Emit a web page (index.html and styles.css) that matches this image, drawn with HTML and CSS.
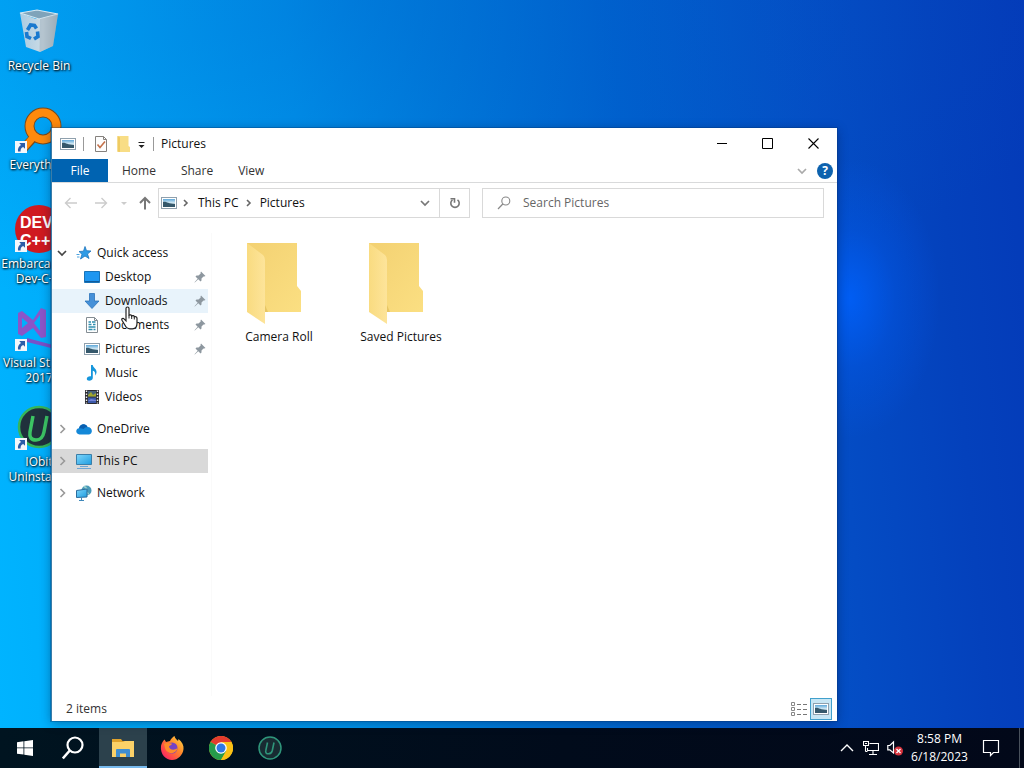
FILE: index.html
```html
<!DOCTYPE html>
<html lang="en">
<head>
<meta charset="utf-8">
<title>Pictures</title>
<link rel="stylesheet" href="styles.css">
</head>
<body>
<svg class="defs" aria-hidden="true">
  <defs>
    <linearGradient id="sky" x1="0" y1="0" x2="0" y2="1"><stop offset="0" stop-color="#5da7d9"/><stop offset=".5" stop-color="#d8ecf5"/><stop offset="1" stop-color="#4a7890"/></linearGradient>
    <linearGradient id="fold" x1="0" y1="0" x2="1" y2="1"><stop offset="0" stop-color="#f3d172"/><stop offset="1" stop-color="#fbdf82"/></linearGradient>
    <linearGradient id="flap" x1="0" y1="0" x2="1" y2="0"><stop offset="0" stop-color="#f9db80"/><stop offset="1" stop-color="#fde49a"/></linearGradient>
    <linearGradient id="screen" x1="0" y1="0" x2="1" y2="1"><stop offset="0" stop-color="#7fd6fb"/><stop offset="1" stop-color="#1f9de0"/></linearGradient>
    <linearGradient id="bin" x1="0" y1="0" x2="1" y2="0"><stop offset="0" stop-color="#a9cbe2"/><stop offset=".6" stop-color="#cbdbe5"/><stop offset="1" stop-color="#a3b6c2"/></linearGradient>
    <linearGradient id="fox" x1="1" y1="0" x2="0" y2="1"><stop offset="0" stop-color="#ffe14a"/><stop offset=".4" stop-color="#ff8a2a"/><stop offset=".75" stop-color="#ff3f4f"/><stop offset="1" stop-color="#e5157c"/></linearGradient>
  </defs>
  <symbol id="i-picture" viewBox="0 0 16 16">
    <rect x=".5" y="2.500" width="15" height="11" fill="#fff" stroke="#8fa0ad"/>
    <rect x="2" y="4" width="12" height="8" fill="url(#sky)"/>
    <path d="M2 7c3-1 5 2 12 2v3H2z" fill="#35586b"/>
  </symbol>
  <symbol id="i-right" viewBox="0 0 10 10"><path d="M3 2 6 5 3 8" fill="none" stroke="currentColor" stroke-width="1.600"/></symbol>
  <symbol id="i-twist" viewBox="0 0 10 10"><path d="M3.500 1 7.500 5 3.500 9" fill="none" stroke="currentColor" stroke-width="1.600"/></symbol>
  <symbol id="i-down" viewBox="0 0 10 10"><path d="M1 3 5 7 9 3" fill="none" stroke="currentColor" stroke-width="1.700"/></symbol>
  <symbol id="i-arrow" viewBox="0 0 16 16"><path d="M14 8H2.500M7.500 3l-5 5 5 5" fill="none" stroke="currentColor" stroke-width="1.400"/></symbol>
  <symbol id="i-pin" viewBox="0 0 12 12"><path d="M7 .5 11.500 5l-1.300.6-.7-.2-2 2.200v2L6.500 10.500 4.300 8.300.8 11.500l-.3-.3L3.700 7.700 1.500 5.500l1-1h2l2.200-2-.2-.8z" fill="#8d979f"/></symbol>
  <symbol id="i-folder" viewBox="0 0 64 82">
    <path d="M0 0H50V43l4 5V69H18L0 60z" fill="url(#fold)"/>
    <path d="M0 0 16 12q2 2 2 5V81L0 69z" fill="url(#flap)"/>
    <path d="M18 62v7h3z" fill="#e6c564"/>
  </symbol>
  <symbol id="i-shortcut" viewBox="0 0 12 12">
    <rect width="12" height="12" fill="#f4f7fb"/>
    <path d="M4.200 2H10v5.800L8.200 6C6 7 5.500 8.300 5.600 10.500H3C2.600 7.500 3.600 5.500 6 4z" fill="#2c5da8"/>
  </symbol>
</svg>

<main class="desktop">
  <div class="shortcuts">
    <a class="shortcut" href="#bin">
      <svg class="shortcut-icon" viewBox="0 0 48 48">
        <path d="m5 6 6 34 14 5 13-6 5-32-22 5z" fill="url(#bin)"/>
        <path d="m5 6 17-3 21 4-19 5z" fill="#7fa3ba"/>
        <path d="m5 6 17-3 21 4-19 5z" fill="none" stroke="#d9e9f2" stroke-width="1.200"/>
        <path d="m25 12-.5 33L38 39l5-32z" fill="#8d9aa5" opacity=".35"/>
        <g fill="none" stroke="#1979cf" stroke-width="3.600"><path d="m12.500 23 3-5 4 .5 2 3"/><path d="m22.500 24.500.5 5-4 2.500"/><path d="m16 31.500-4-2-.5-4.500"/></g>
      </svg>
      <span>Recycle Bin</span>
    </a>
    <a class="shortcut" href="#everything">
      <svg class="shortcut-icon" viewBox="0 0 48 48">
        <path d="M21 29 8 43" stroke="#7a4a1c" stroke-width="9"/><circle cx="28" cy="20" r="13.500" fill="none" stroke="#7a4a1c" stroke-width="10"/>
        <path d="M21 28 8 43" stroke="#ff8a0c" stroke-width="7"/><circle cx="28" cy="20" r="13.500" fill="none" stroke="#ff8a0c" stroke-width="8"/>
        <use href="#i-shortcut" x="0" y="35" width="12" height="12"/>
      </svg>
      <span>Everything</span>
    </a>
    <a class="shortcut" href="#devcpp">
      <svg class="shortcut-icon" viewBox="0 0 48 48">
        <circle cx="24" cy="24" r="24" fill="#cf1a20"/>
        <text class="dev-logo" x="5" y="23">DEV</text><text class="dev-logo" x="5" y="41">C++</text>
        <use href="#i-shortcut" x="0" y="35" width="12" height="12"/>
      </svg>
      <span>Embarcadero Dev-C++</span>
    </a>
    <a class="shortcut" href="#vs">
      <svg class="shortcut-icon" viewBox="0 0 48 48">
        <path d="m3 9 4-2 11 9 8-12 5 2v27l-5 1-8-10-11 8-4-2zm4 5v10l6-5zm18-3-6 8 6 8z" fill="#8b55c8" fill-rule="evenodd"/>
        <path d="m12 34 26 7 10 6-12-3-24-6z" fill="#7a50c8"/>
        <use href="#i-shortcut" x="0" y="35" width="12" height="12"/>
      </svg>
      <span>Visual Studio 2017</span>
    </a>
    <a class="shortcut" href="#iobit">
      <svg class="shortcut-icon" viewBox="0 0 48 48">
        <circle cx="24" cy="24" r="20" fill="#20303c" stroke="#36b55a" stroke-width="2.500"/>
        <path d="m18 13-3 16c-.8 5 1 8 6 8 4 0 7-3 8-8l3-16" fill="none" stroke="#3cc463" stroke-width="3.500"/>
        <use href="#i-shortcut" x="0" y="35" width="12" height="12"/>
      </svg>
      <span>IObit Uninstaller</span>
    </a>
  </div>

  <section class="window" aria-label="Pictures">
    <header class="titlebar">
      <svg class="icon16"><use href="#i-picture"/></svg>
      <i class="sep sep-first"></i>
      <button class="quick" aria-label="Properties"><svg class="icon16" viewBox="0 0 16 16"><path d="M2.500.5h8l3 3v12h-11z" fill="#fdfdfd" stroke="#85817d"/><path d="M10.500.5v3h3" fill="none" stroke="#85817d"/><path d="m4.500 8.500 2.500 3 5-6" fill="none" stroke="#c4714a" stroke-width="1.600"/></svg></button>
      <button class="quick" aria-label="New folder"><svg class="icon16" viewBox="0 0 16 16"><path d="M2.500 0h11v10l1.500 1v5H2.500z" fill="#f8dd85"/><path d="M2.500 0 5 1.500V16l-2.500-.5z" fill="#efcb62"/></svg></button>
      <button class="quick quick-menu" aria-label="Customize toolbar"><svg class="icon10" viewBox="0 0 10 10"><path d="M1.500 3h6v1h-6zM1.500 6h6l-3 3z" fill="#222"/></svg></button>
      <i class="sep"></i>
      <h1>Pictures</h1>
      <div class="caption">
        <button aria-label="Minimize"><svg class="icon12" viewBox="0 0 12 12"><path d="M1 5.500h10" stroke="#000"/></svg></button>
        <button aria-label="Maximize"><svg class="icon12" viewBox="0 0 12 12"><path d="M.5.500h10v10H.5z" fill="none" stroke="#000"/></svg></button>
        <button aria-label="Close"><svg class="icon12" viewBox="0 0 12 12"><path d="m.5.500 10 10M10.500.500l-10 10" stroke="#000" stroke-width="1.100"/></svg></button>
      </div>
    </header>

    <nav class="ribbon">
      <button class="file-tab">File</button><button>Home</button><button>Share</button><button>View</button>
      <div class="ribbon-end">
        <button class="plain faint" aria-label="Expand the ribbon"><svg class="icon10"><use href="#i-down"/></svg></button>
        <button class="plain help" aria-label="Help">?</button>
      </div>
    </nav>

    <div class="address-row">
      <div class="history">
        <button class="plain step off" aria-label="Back"><svg class="icon16"><use href="#i-arrow"/></svg></button>
        <button class="plain step off forward" aria-label="Forward"><svg class="icon16"><use href="#i-arrow"/></svg></button>
        <button class="plain recent off" aria-label="Recent locations"><svg class="icon10" viewBox="0 0 10 10"><path d="M2 4h6L5 7z" fill="currentColor"/></svg></button>
        <button class="plain up" aria-label="Up"><svg class="icon16" viewBox="0 0 16 16"><path d="M8 14.500V3M3 8l5-5 5 5" fill="none" stroke="#777" stroke-width="2"/></svg></button>
      </div>
      <div class="address">
        <svg class="icon16"><use href="#i-picture"/></svg>
        <svg class="icon10 crumb-sep"><use href="#i-right"/></svg>
        <a href="#pc">This PC</a>
        <svg class="icon10 crumb-sep"><use href="#i-right"/></svg>
        <a href="#pictures">Pictures</a>
        <button class="plain dropdown" aria-label="Previous locations"><svg class="icon10"><use href="#i-down"/></svg></button>
        <button class="plain refresh" aria-label="Refresh"><svg class="icon12" viewBox="0 0 12 12"><path d="M8.500 2.800A4.200 4.200 0 1 1 3.500 2.800" fill="none" stroke="#777" stroke-width="1.600"/><path d="M1.500 1.800h4v4" fill="none" stroke="#777" stroke-width="1.600"/></svg></button>
      </div>
      <label class="search">
        <svg class="icon14" viewBox="0 0 14 14"><circle cx="8.800" cy="5" r="4" fill="none" stroke="#888" stroke-width="1.100"/><path d="M5.800 8 1 13" stroke="#888" stroke-width="1.200"/></svg>
        <input type="text" placeholder="Search Pictures" aria-label="Search Pictures">
      </label>
    </div>

    <div class="body">
      <nav class="tree">
        <div class="group">
          <a class="node" href="#quick"><svg class="icon10 twist open"><use href="#i-down"/></svg>
            <svg class="icon16" viewBox="0 0 16 16"><path d="m9 1.500 1.500 4.200 4.500.3-3.500 3 1.500 4.500-4-2.500-4.500 3 1.500-4.700L3 6.500l4.500-.3z" fill="#2f9be6" stroke="#1c74bd" stroke-width=".8"/><path d="M.5 9.500h3M1 12h2.500" stroke="#4aa3e0"/></svg>Quick access</a>
          <a class="node leaf" href="#desktop"><svg class="icon16" viewBox="0 0 16 16"><path d="M.5 2.500h15v11H.5z" fill="#1e96f0" stroke="#1873b8"/><path d="M1 12.500h14" stroke="#0f5c9d"/></svg>Desktop<svg class="pin"><use href="#i-pin"/></svg></a>
          <a class="node leaf hover" href="#downloads"><svg class="icon16" viewBox="0 0 16 16"><path d="M5.500.5h5V8h4.500l-7 7.500L1 8h4.500z" fill="#4590d8" stroke="#2c73ba" stroke-width=".8"/></svg>Downloads<svg class="pin"><use href="#i-pin"/></svg>
            <svg class="cursor" viewBox="0 0 18 24"><path d="M5 2.500c0-2 3-2 3 0v7c.5-1 2.600-.8 2.700.5.800-.8 2.500-.3 2.600.8.900-.6 2.700 0 2.700 1.500v5c0 3-1.500 5.500-4.500 5.500H9c-3 0-4-1.500-5-3.500l-3-5c-.8-1.500 1-2.500 2-1.500l2 2z" fill="#fff" stroke="#222" stroke-width="1.200"/><path d="M8 9v3.500M10.700 10v3M13.300 11v2.500" stroke="#222"/></svg></a>
          <a class="node leaf" href="#documents"><svg class="icon16" viewBox="0 0 16 16"><path d="M2.500.5h8l3 3v12h-11z" fill="#fff" stroke="#848d93"/><path d="M10.500.5v3h3" fill="none" stroke="#848d93"/><path d="M4.500 5H7M8 5h3.500M4.500 7.500h3M9 7.500h2.500M4.500 10h7M4.500 12.500h4M9.500 12.500h2" stroke="#2f8eaf" stroke-width="1.300"/></svg>Documents<svg class="pin"><use href="#i-pin"/></svg></a>
          <a class="node leaf" href="#pictures"><svg class="icon16"><use href="#i-picture"/></svg>Pictures<svg class="pin"><use href="#i-pin"/></svg></a>
          <a class="node leaf" href="#music"><svg class="icon16" viewBox="0 0 16 16"><path d="M7 0h1.800c.2 3 4.200 3.500 3.700 7.500-.2 1.500-.8 2.300-1.500 3 .7-3-.5-4.300-2.200-4.700V13c0 3-6 4-6 .8 0-2 2.400-3 4.200-2.500z" fill="#1696dc"/></svg>Music</a>
          <a class="node leaf" href="#videos"><svg class="icon16" viewBox="0 0 16 16"><path d="M1 1h14v14H1z" fill="#2b2b31"/><path d="M4 2h8v5.500H4z" fill="#46627b"/><path d="M4 8.500h8V14H4z" fill="#3b59a8"/><path d="m4 6 3-3 2 3 3-2v3.500H4z" fill="#a2a62c"/><path d="m4 12 3-2 5 1v1z" fill="#7482d8"/><path d="M2.500 1.500v13M13.500 1.500v13" stroke="#eee" stroke-width="1.400" stroke-dasharray="1.500 1.500"/></svg>Videos</a>
        </div>
        <div class="group"><a class="node" href="#onedrive"><svg class="icon10 twist"><use href="#i-twist"/></svg><svg class="icon16" viewBox="0 0 16 16"><path d="M3.500 13.500C-1 13-.5 7.500 3 7.300 4 2.500 10 2 11.500 6c5 0 6 6.500 1.500 7.500z" fill="#1488d8"/><path d="M3 7.300C4 2.500 10 2 11.500 6c-2 0-3 .8-4 2-1.200-.8-3-.9-4.500-.7z" fill="#0a5fb0"/></svg>OneDrive</a></div>
        <div class="group"><a class="node selected" href="#pc"><svg class="icon10 twist"><use href="#i-twist"/></svg><svg class="icon16" viewBox="0 0 16 16"><path d="M.5 1.500h15v10H.5z" fill="url(#screen)" stroke="#3b7ea8"/><path d="M4 13.500h8M1 15.500h14" stroke="#6da6d5"/></svg>This PC</a></div>
        <div class="group"><a class="node" href="#network"><svg class="icon10 twist"><use href="#i-twist"/></svg><svg class="icon16" viewBox="0 0 16 16"><circle cx="10.500" cy="5.500" r="5" fill="#4a9ab8"/><path d="M8 1.500c3 1 3 3 1.500 4s3 2 3 4" fill="none" stroke="#9ed5cf" stroke-width="1.500"/><path d="M.5 5.500 11 4v8L.5 12.500z" fill="url(#screen)" stroke="#2c6d9d"/><path d="M5.500 13v2M3 15.500h5" stroke="#3f88ba"/></svg>Network</a></div>
      </nav>
      <div class="files">
        <a class="file" href="#camera"><svg><use href="#i-folder"/></svg><span>Camera Roll</span></a>
        <a class="file" href="#saved"><svg><use href="#i-folder"/></svg><span>Saved Pictures</span></a>
      </div>
    </div>

    <footer class="status">
      <span>2 items</span>
      <div class="views">
        <button class="plain view" aria-label="Details"><svg class="icon16" viewBox="0 0 16 16"><path d="M.5 1.500h3v3h-3zM.5 6.500h3v3h-3zM.5 11.500h3v3h-3z" fill="none" stroke="#888"/><path d="M6 3.500h10M6 8.500h10M6 13.500h10" stroke="#777" stroke-dasharray="4 2"/></svg></button>
        <button class="plain view active" aria-label="Large icons"><svg class="icon16"><use href="#i-picture"/></svg></button>
      </div>
    </footer>
  </section>
</main>

<footer class="taskbar">
  <div class="apps">
    <button aria-label="Start"><svg class="icon16" viewBox="0 0 16 16"><path d="m0 2.200 6.500-.9v6.200H0zM7.300 1.200 16 0v7.500H7.300zM0 8.300h6.500v6.300L0 13.700zM7.300 8.300H16V16l-8.700-1.200z" fill="#fff"/></svg></button>
    <button aria-label="Search"><svg class="icon24" viewBox="0 0 24 24"><circle cx="13" cy="9" r="7.500" fill="none" stroke="#fff" stroke-width="2.200"/><path d="M7.800 14.500.8 22.500" stroke="#fff" stroke-width="2.600"/></svg></button>
    <button class="running" aria-label="File Explorer"><svg class="icon24" viewBox="0 0 24 24"><path d="M1 3h9l1.500 2H23v5H1z" fill="#e0a22c"/><path d="M1 6h11l2-1h9v16H1z" fill="#fbd168"/><path d="M5 21v-7q0-1 1-1h12q1 0 1 1v7h-4v-3.500H9V21z" fill="#3f8ed2"/></svg></button>
    <button aria-label="Firefox"><svg class="icon24" viewBox="0 0 24 24"><path d="M1 10C1.500 7 3 5 4.500 3.500L6 6l4-1c1-2.500 3-4 4.500-5 .5 2.500 2.500 3.500 3.500 5l.5-2C22 6 24 9.500 23.500 13 23 19 18 24 12 24S0 18.500 1 10z" fill="url(#fox)"/><circle cx="12" cy="12" r="5.500" fill="#7542c5"/><path d="M4 8c3-2 5-.5 8-.5-.5 2-3 2-3 3.500 2 4 6 3 8.500 1-1 5-6 6.500-9.500 4C4.500 14 5 10.500 4 8z" fill="#ff8c2b"/></svg></button>
    <button aria-label="Chrome"><svg class="icon24" viewBox="0 0 24 24"><circle cx="12" cy="12" r="12" fill="#fbc116"/><path d="M12 12 1.600 6A12 12 0 0 1 22.400 6z" fill="#e33b2e"/><path d="M12 12 1.600 6A12 12 0 0 0 12 24l5.200-9z" fill="#269b4b"/><path d="M12 6h10.400A12 12 0 0 1 12 24l5.200-9z" fill="#fbc116"/><circle cx="12" cy="12" r="5.800" fill="#fff"/><circle cx="12" cy="12" r="4.500" fill="#2f78e5"/></svg></button>
    <button aria-label="IObit Uninstaller"><svg class="icon24" viewBox="0 0 24 24"><circle cx="12" cy="12" r="11" fill="#182b32" stroke="#2f967b" stroke-width="1.500"/><path d="m9.500 6.500-1.700 8c-.5 2 .5 3.300 2.700 3.300s3.300-1.300 3.800-3.300l1.700-8" fill="none" stroke="#2f967b" stroke-width="1.600"/></svg></button>
  </div>
  <div class="tray">
    <button class="tray-icon" aria-label="Show hidden icons"><svg class="icon14" viewBox="0 0 14 14"><path d="m1 10 6-6 6 6" fill="none" stroke="#fff" stroke-width="1.400"/></svg></button>
    <button class="tray-icon" aria-label="Network"><svg class="icon16" viewBox="0 0 16 16"><path d="M6.500 3.500h9v7h-11V8M10 11v3M6 14.500h8M.5 1.500h5v4h-5zM2.500 6v5.500M2.500 11.500h2" fill="none" stroke="#fff" stroke-width="1.100"/><path d="M2 3h2v1H2z" fill="#fff"/></svg></button>
    <button class="tray-icon" aria-label="Volume muted"><svg class="icon16" viewBox="0 0 16 16"><path d="M.8 5.500h2L6.500 2v11L2.800 9.800h-2z" fill="none" stroke="#fff" stroke-width="1.200"/><circle cx="11.500" cy="11" r="4.500" fill="#d5323c"/><path d="m9.500 9 4 4M13.500 9l-4 4" stroke="#fff" stroke-width="1.300"/></svg></button>
    <button class="clock"><span>8:58 PM</span><span>6/18/2023</span></button>
    <button class="notify" aria-label="Notifications"><svg class="icon18" viewBox="0 0 18 18"><path d="M1.500 1.500h15v12h-5l-3 3v-3h-7z" fill="none" stroke="#fff" stroke-width="1.200"/></svg></button>
    <button class="peek" aria-label="Show desktop"></button>
  </div>
</footer>
</body>
</html>
```

FILE: styles.css
```css
* { box-sizing: border-box; }

body {
  margin: 0;
  height: 100vh;
  display: flex;
  flex-direction: column;
  overflow: hidden;
  font: 12px/16px "Open Sans", "Noto Sans", sans-serif;
  color: #111;
}

a { color: inherit; text-decoration: none; }
svg { display: block; flex: none; }

button {
  margin: 0;
  padding: 0;
  border: 0;
  background: none;
  font: inherit;
  color: inherit;
  display: flex;
  align-items: center;
  justify-content: center;
}

.defs { position: absolute; width: 0; height: 0; }
.icon10 { width: 10px; height: 10px; }
.icon12 { width: 12px; height: 12px; }
.icon14 { width: 14px; height: 14px; }
.icon16 { width: 16px; height: 16px; }
.icon18 { width: 18px; height: 18px; }
.icon24 { width: 24px; height: 24px; }

/* Desktop */
.desktop {
  flex: 1;
  min-height: 0;
  position: relative;
  background:
    radial-gradient(ellipse 90px 140px at 83% 41%, rgba(0, 98, 255, .8), rgba(0, 94, 248, .3) 50%, rgba(0, 90, 240, 0)),
    radial-gradient(ellipse 75% 45% at 35% 0, rgba(0, 95, 200, .35), rgba(0, 95, 200, 0)),
    linear-gradient(85deg, #00b4ff 0%, #00a9f8 14%, #0095ec 32%, #007cdc 46%, #0060ce 62%, #044cc4 80%, #0441bc 91%, #043ab8 100%);
}

.shortcuts {
  display: flex;
  flex-direction: column;
  width: 78px;
  padding-top: 7px;
}

.shortcut {
  height: 99px;
  display: flex;
  flex-direction: column;
  align-items: center;
  gap: 3px;
  color: #fff;
  line-height: 15px;
  text-align: center;
  text-shadow: 1px 1px 2px #000, 0 0 3px rgba(0, 0, 0, .8);
}

.shortcut-icon { width: 48px; height: 48px; }
.dev-logo { font: bold 16px "Liberation Sans", sans-serif; fill: #fff; text-shadow: none; }

/* Window */
.window {
  position: absolute;
  inset: 128px 187px 7px 51px;
  display: flex;
  flex-direction: column;
  background: #fff;
  border-left: 1px solid #3a7ca8;
  box-shadow: 0 0 0 1px rgba(0, 50, 110, .3), 0 2px 10px rgba(0, 20, 60, .4);
}

.titlebar { height: 31px; display: flex; align-items: center; padding-left: 8px; }
.titlebar h1 { margin: 0 0 0 7px; font-size: 12px; font-weight: 400; }
.sep { width: 1px; height: 14px; background: #999; }
.sep-first { margin: 0 9px 0 7px; }
.quick { margin-right: 6px; }
.caption { margin-left: auto; align-self: stretch; display: flex; }
.caption button { width: 46px; }

.ribbon { display: flex; height: 24px; border-bottom: 1px solid #d9dadb; color: #333; }
.ribbon > button { padding: 0 11px 0 14px; }
.ribbon > .file-tab { width: 56px; padding: 0; background: #0063b1; color: #fff; }
.ribbon-end { margin-left: auto; display: flex; align-items: center; gap: 10px; padding-right: 4px; }
.faint { color: #aaa; }
.help { width: 16px; height: 16px; border-radius: 50%; background: #0d62ae; color: #fff; font-weight: 700; }

.address-row { display: flex; padding: 5px 13px 0 10px; height: 50px; align-items: flex-start; }
.history { display: flex; align-items: center; width: 96px; height: 30px; }
.step { width: 18px; margin-right: 12px; }
.forward { transform: scaleX(-1); margin-right: 8px; }
.recent { width: 12px; }
.up { width: 18px; margin-left: 6px; }
.off { color: #ccc; }

.address { flex: 1 1 312px; display: flex; align-items: center; height: 30px; border: 1px solid #d9d9d9; padding-left: 2px; }
.crumb-sep { margin: 0 7px 0 4px; color: #666; }
.address a + .crumb-sep { margin: 0 6px 0 5px; }
.dropdown { margin-left: auto; width: 28px; align-self: stretch; color: #777; }
.refresh { width: 30px; align-self: stretch; border-left: 1px solid #d9d9d9; }

.search { flex: 1 1 342px; display: flex; align-items: center; gap: 12px; height: 30px; margin-left: 12px; padding-left: 14px; border: 1px solid #d9d9d9; }
.search input { flex: 1; min-width: 0; border: 0; padding: 0; outline: 0; font: inherit; background: none; }
.search input::placeholder { color: #666; opacity: 1; }

.body { flex: 1; min-height: 0; display: flex; }
.tree { width: 160px; padding: 8px 3px 0 0; border-right: 1px solid #fafafa; display: flex; flex-direction: column; gap: 8px; }
.node { position: relative; display: flex; align-items: center; gap: 5px; height: 24px; padding-left: 5px; }
.node .twist { color: #999; margin-right: 4px; }
.node .twist.open { color: #444; }
.leaf { padding-left: 32px; }
.hover { background: #e8f3fb; }
.selected { background: #d9d9d9; }
.pin { width: 12px; height: 12px; margin: 0 2px 0 auto; }
.cursor { position: absolute; left: 69px; top: 17px; width: 18px; height: 24px; z-index: 1; }

.files { flex: 1; display: flex; align-items: flex-start; padding: 10px 0 0 6px; }
.file { width: 122px; display: flex; flex-direction: column; align-items: center; gap: 4px; }
.file svg { width: 64px; height: 82px; }

.status { height: 25px; display: flex; align-items: center; justify-content: space-between; padding: 0 5px 0 14px; color: #333; }
.views { display: flex; }
.view { width: 22px; height: 22px; }
.view.active { border: 1px solid #41a0cc; background: #c8e6f4; }

/* Taskbar */
.taskbar { height: 40px; display: flex; justify-content: space-between; background: linear-gradient(90deg, #001420, #010b1b 55%, #020819); color: #fff; }
.apps { display: flex; gap: 1px; padding-left: 1px; }
.apps button { width: 48px; }
.apps .running { background: #2c414c; box-shadow: inset 0 -2px #76b9ed; }
.tray { display: flex; }
.tray-icon { width: 24px; }
.clock { flex-direction: column; width: 57px; margin-left: 4px; line-height: 18px; }
.notify { width: 46px; margin-right: 5px; }
.peek { width: 5px; border-left: 1px solid #49515c; }
```
